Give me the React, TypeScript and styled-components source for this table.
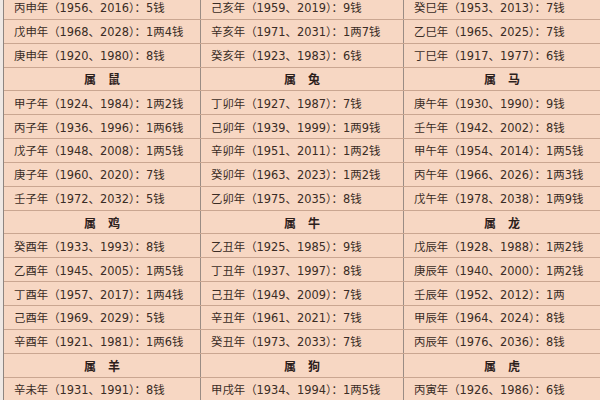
import styled, { createGlobalStyle } from 'styled-components';

const GlobalStyle = createGlobalStyle`
    html, body {
        margin: 0;
        padding: 0;
        background: #efe8e4;
        overflow: hidden;
    }
`;

const Page = styled.div`
    width: 600px;
    height: 400px;
    overflow: hidden;
    padding-left: 3px;
    box-sizing: border-box;
    background: #efe8e4;
`;

const Sheet = styled.div`
    margin-top: -4px;
    background-color: #f7d7c3;
    border-left: 1px solid #8e8580;
    font-family: 'DejaVu Sans', 'Noto Sans CJK SC', sans-serif;
    color: #3a2c25;
`;

const Row = styled.div`
    display: grid;
    grid-template-columns: 197px 203px 1fr;
    height: 23.85px;
    box-sizing: border-box;
    border-bottom: 1px solid #caa691;
`;

const Cell = styled.div<{ $header?: boolean }>`
    display: flex;
    align-items: center;
    justify-content: ${(p) => (p.$header ? 'center' : 'flex-start')};
    padding-left: ${(p) => (p.$header ? '0' : '10px')};
    font-size: ${(p) => (p.$header ? '12px' : '11.4px')};
    font-weight: ${(p) => (p.$header ? 700 : 400)};
    color: ${(p) => (p.$header ? '#2c201b' : '#3a2c25')};
    white-space: nowrap;
    &:not(:last-child) {
        border-right: 1px solid #9a8c84;
    }
`;

type RowData = { header?: boolean; cells: string[] };

const rows: RowData[] = [
    { cells: ['丙申年（1956、2016）：5钱', '己亥年（1959、2019）：9钱', '癸巳年（1953、2013）：7钱'] },
    { cells: ['戊申年（1968、2028）：1两4钱', '辛亥年（1971、2031）：1两7钱', '乙巳年（1965、2025）：7钱'] },
    { cells: ['庚申年（1920、1980）：8钱', '癸亥年（1923、1983）：6钱', '丁巳年（1917、1977）：6钱'] },
    { header: true, cells: ['属　鼠', '属　兔', '属　马'] },
    { cells: ['甲子年（1924、1984）：1两2钱', '丁卯年（1927、1987）：7钱', '庚午年（1930、1990）：9钱'] },
    { cells: ['丙子年（1936、1996）：1两6钱', '己卯年（1939、1999）：1两9钱', '壬午年（1942、2002）：8钱'] },
    { cells: ['戊子年（1948、2008）：1两5钱', '辛卯年（1951、2011）：1两2钱', '甲午年（1954、2014）：1两5钱'] },
    { cells: ['庚子年（1960、2020）：7钱', '癸卯年（1963、2023）：1两2钱', '丙午年（1966、2026）：1两3钱'] },
    { cells: ['壬子年（1972、2032）：5钱', '乙卯年（1975、2035）：8钱', '戊午年（1978、2038）：1两9钱'] },
    { header: true, cells: ['属　鸡', '属　牛', '属　龙'] },
    { cells: ['癸酉年（1933、1993）：8钱', '乙丑年（1925、1985）：9钱', '戊辰年（1928、1988）：1两2钱'] },
    { cells: ['乙酉年（1945、2005）：1两5钱', '丁丑年（1937、1997）：8钱', '庚辰年（1940、2000）：1两2钱'] },
    { cells: ['丁酉年（1957、2017）：1两4钱', '己丑年（1949、2009）：7钱', '壬辰年（1952、2012）：1两'] },
    { cells: ['己酉年（1969、2029）：5钱', '辛丑年（1961、2021）：7钱', '甲辰年（1964、2024）：8钱'] },
    { cells: ['辛酉年（1921、1981）：1两6钱', '癸丑年（1973、2033）：7钱', '丙辰年（1976、2036）：8钱'] },
    { header: true, cells: ['属　羊', '属　狗', '属　虎'] },
    { cells: ['辛未年（1931、1991）：8钱', '甲戌年（1934、1994）：1两5钱', '丙寅年（1926、1986）：6钱'] },
];

export default function App() {
    return (
        <>
            <GlobalStyle />
            <Page>
                <Sheet>
                    {rows.map((r, i) => (
                        <Row key={i}>
                            {r.cells.map((c, j) => (
                                <Cell key={j} $header={r.header}>
                                    {c}
                                </Cell>
                            ))}
                        </Row>
                    ))}
                </Sheet>
            </Page>
        </>
    );
}
